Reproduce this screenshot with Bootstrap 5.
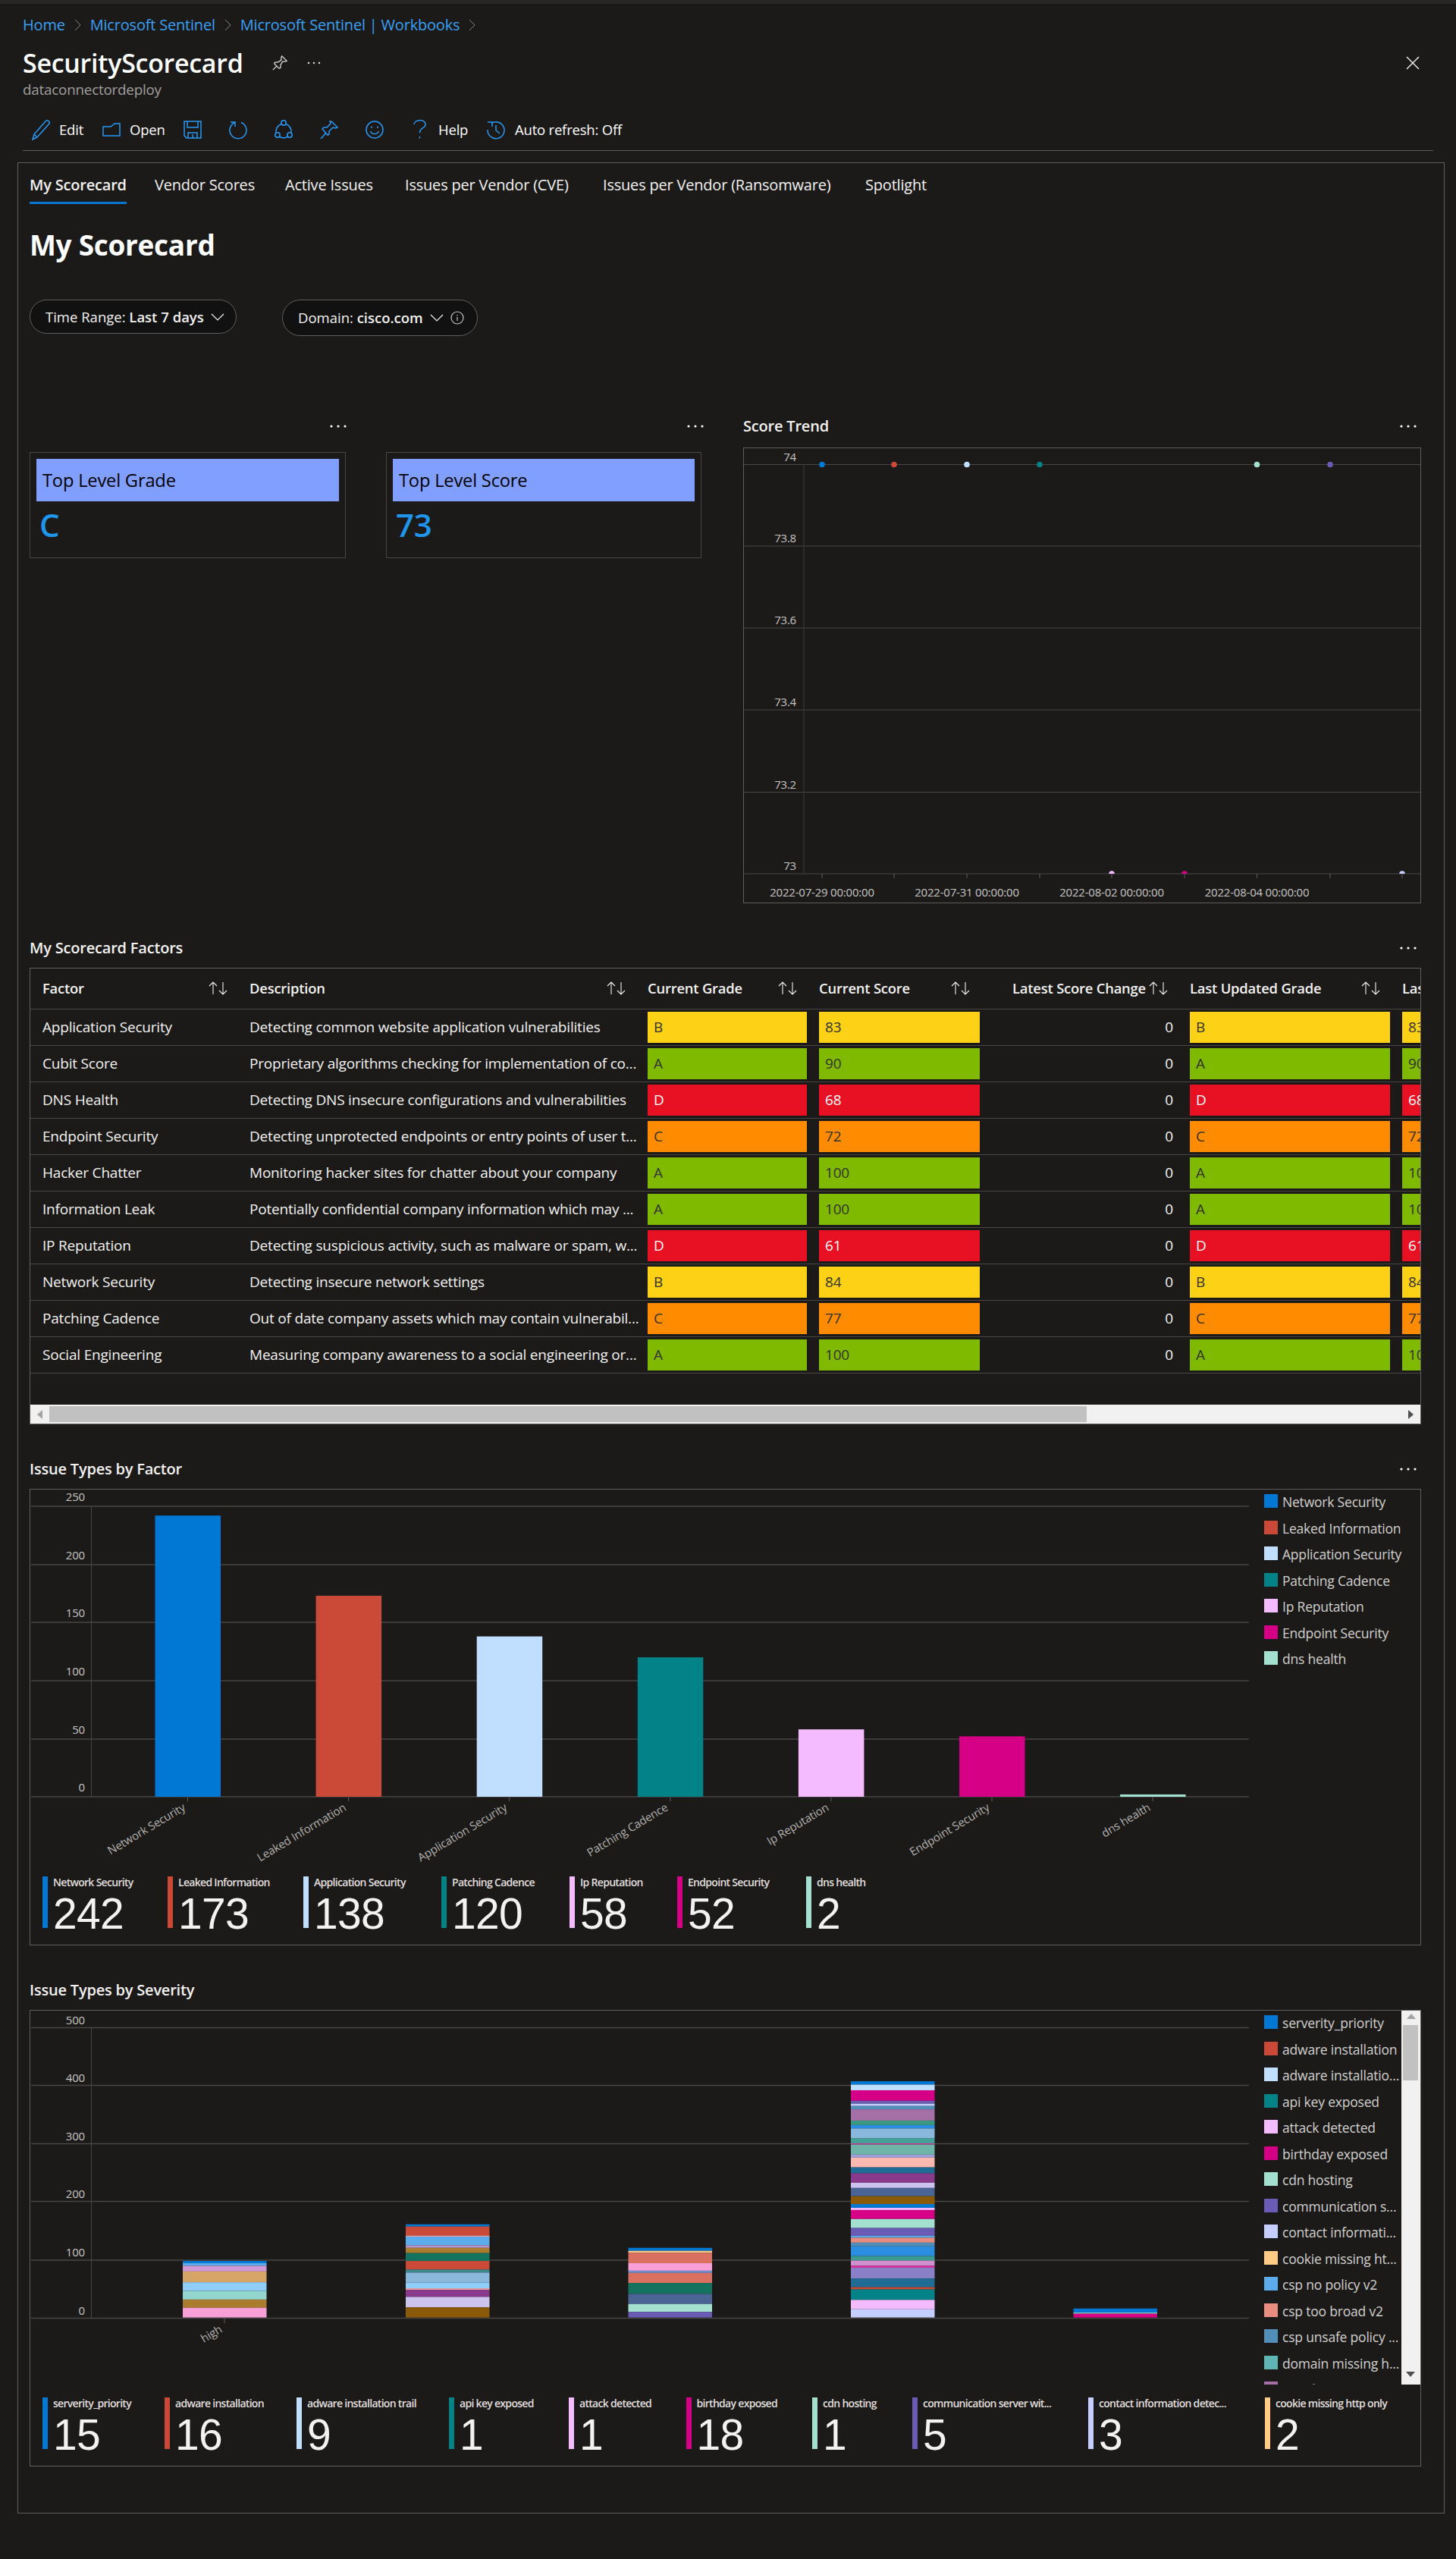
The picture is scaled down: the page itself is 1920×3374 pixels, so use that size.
<!DOCTYPE html>
<html lang="en">
<head>
  <meta charset="UTF-8">
  <title>SecurityScorecard</title>
  <meta name="viewport" content="width=device-width, initial-scale=1">
  <link href="https://cdn.jsdelivr.net/npm/bootstrap@5.3.3/dist/css/bootstrap.min.css" rel="stylesheet">
  <style>
    body {
      background: #1b1a19;
      color: #f3f2f1;
      font-family: "Open Sans", "Liberation Sans", sans-serif;
      font-size: 19px;
      letter-spacing: -.2px;
    }
    svg { display: block; flex: none; }
    .top-strip { height: 5px; background: #292827; }
    .page-head { padding: 14px 30px 0; }
    .crumbs { height: 28px; gap: 12px; font-size: 20px; }
    .crumbs a { color: #3aa0f3; text-decoration: none; }
    .title-row { height: 44px; margin-top: 14px; }
    .title-row h1 { font-size: 34px; font-weight: 600; margin: 0; color: #fff; letter-spacing: -.3px; width: 328px; white-space: nowrap; }
    .close-x { margin-left: auto; margin-right: 17px; }
    .sub-title { height: 24px; margin-top: 1px; color: #a19f9d; font-size: 18.8px; line-height: 24px; }
    .tool-bar { height: 51px; margin-top: 18px; border-bottom: 1px solid #605e5c; padding: 0 0 5px 12px; color: #fff; font-size: 18.5px; }
    .main-box { margin: 15px 15px 60px 23px; border: 1px solid #605e5c; padding: 0 30px 59px 15px; height: 3100px; }
    .tab-row { height: 54px; font-size: 20px; }
    .tab-row .nav-item:nth-child(1) { width: 165px; }
    .tab-row .nav-item:nth-child(2) { width: 172px; }
    .tab-row .nav-item:nth-child(3) { width: 158px; }
    .tab-row .nav-item:nth-child(4) { width: 261px; }
    .tab-row .nav-item:nth-child(5) { width: 346px; }
    .tab-row .nav-link { display: inline-block; color: #f3f2f1; padding: 7px 0 0; height: 54px; border-bottom: 3px solid transparent; line-height: 44px; white-space: nowrap; font-size: 20px; }
    .tab-row .nav-link.active { font-weight: 600; border-bottom-color: #0078d4; }
    .page-title { font-size: 37px; font-weight: 700; margin: 29px 0 0; height: 50px; line-height: 50px; color: #fff; letter-spacing: -.3px; }
    .filter-row { margin-top: 47px; height: 48px; align-items: flex-start; gap: 60px; }
    .filter-pill { background: #111; border: 1.5px solid #605e5c; color: #f3f2f1; font-size: 18.5px; height: 45px; width: 273px; padding: 0 18px 0 20px; gap: 9px; white-space: nowrap; }
    .filter-pill.tall { height: 48px; width: 258px; }
    .panel-row { margin-top: 101px; }
    .panel-head { height: 36px; font-weight: 600; font-size: 20px; }
    .score-tile { height: 140px; margin-top: 16px; border: 1px solid #484644; padding: 8px; }
    .score-tile-head { height: 56px; background: #809fff; color: #000; font-size: 23.7px; padding: 2px 8px 0; display: flex; align-items: center; }
    .score-tile-value { color: #1f95ec; font-size: 42px; font-weight: 600; line-height: 60px; margin-top: 1px; padding-left: 4px; }
    .chart-box { border: 1px solid #605e5c; }
    .trend-box { height: 601px; margin-top: 10px; }
    .section-gap { margin-top: 41px; }
    .box-gap { margin-top: 8px; height: 602px; }
    .factor-wrap { height: 575px; overflow: hidden; }
    .factor-table { table-layout: fixed; width: 2081px; margin: 0; --bs-table-bg: transparent; --bs-table-color: #f3f2f1; --bs-table-border-color: #484644; color: #f3f2f1; }
    .factor-table th { height: 53px; padding: 0 21px 0 8px; vertical-align: middle; font-weight: 600; font-size: 18.4px; white-space: nowrap; }
    .factor-table td { height: 48px; padding: 0 8px; vertical-align: middle; white-space: nowrap; overflow: hidden; }
    .factor-table th:first-child, .factor-table td:first-child { padding-left: 16px; }
    .grade-cell { height: 41px; line-height: 41px; padding-left: 8px; color: #323130; }
    .grade-red { background: #e81123; color: #fff; }
    .grade-yellow { background: #fcd116; }
    .grade-green { background: #7fba00; }
    .grade-orange { background: #ff8c00; }
    .scroll-h { height: 25px; background: #f1f1f1; }
    .scroll-h-thumb { width: 1368px; background: #c1c1c1; margin: 2px 0; }
    .arrow-cell { width: 25px; flex: none; }
    .chart-area { height: 500px; }
    .legend-col { width: 226px; flex: none; padding: 6px 0 0 20px; font-size: 17.5px; color: #d2d0ce; overflow: hidden; position: relative; }
    .legend-item { height: 34.5px; display: flex; gap: 6px; align-items: flex-start; line-height: 20px; white-space: nowrap; }
    .legend-swatch { width: 18px; height: 18px; flex: none; }
    .stat-row { padding-left: 16px; margin-top: 10px; height: 68px; }
    .stat-tile { display: flex; gap: 7px; flex: none; }
    .stat-bar { width: 7px; height: 68px; flex: none; }
    .stat-label { font-size: 14px; font-weight: 600; line-height: 16px; color: #e1dfdd; letter-spacing: -.7px; white-space: nowrap; }
    .stat-value { font-family: "Liberation Sans", sans-serif; font-size: 57px; line-height: 52px; margin-top: 7px; color: #f3f2f1; letter-spacing: -.7px; }
    .severity-area { height: 493px; }
    .severity-stats { margin-top: 17px; }
    .scroll-v { position: absolute; right: 0; top: 0; bottom: 0; width: 25px; background: #f1f1f1; }
    .scroll-v-thumb { position: absolute; left: 2px; right: 3px; top: 19px; height: 73px; background: #c1c1c1; }
    .chart-text { font-family: "Open Sans", "Liberation Sans", sans-serif; font-size: 15px; letter-spacing: -.2px; }
  </style>
</head>
<body>
  <div class="top-strip"></div>

  <div class="page-head">
    <nav class="crumbs d-flex align-items-center">
      <a href="#">Home</a>
      <svg width="9" height="16" viewBox="0 0 9 16"><path d="M1 1l7 7-7 7" fill="none" stroke="#8a8886"/></svg>
      <a href="#">Microsoft Sentinel</a>
      <svg width="9" height="16" viewBox="0 0 9 16"><path d="M1 1l7 7-7 7" fill="none" stroke="#8a8886"/></svg>
      <a href="#">Microsoft Sentinel | Workbooks</a>
      <svg width="9" height="16" viewBox="0 0 9 16"><path d="M1 1l7 7-7 7" fill="none" stroke="#8a8886"/></svg>
    </nav>

    <div class="title-row d-flex align-items-center">
      <h1>SecurityScorecard</h1>
      <svg width="22" height="22" viewBox="0 0 24 24" fill="none" stroke="#e1dfdd" stroke-width="1.4"><path d="M15 2l7 7-2 1-4 0-3 5 0 4-2 1-7-7 1-2 4 0 5-3 0-4zM8 16l-6 6"/></svg>
      <svg class="ms-4" width="20" height="4" viewBox="0 0 20 4" fill="#e1dfdd"><circle cx="3" cy="2" r="1.2"/><circle cx="10" cy="2" r="1.2"/><circle cx="17" cy="2" r="1.2"/></svg>
      <svg class="close-x" width="20" height="20" viewBox="0 0 20 20" stroke="#f3f2f1" stroke-width="1.4"><path d="M2 2l16 16M18 2L2 18"/></svg>
    </div>
    <div class="sub-title">dataconnectordeploy</div>

    <div class="tool-bar d-flex align-items-center">
      <svg width="24" height="28" viewBox="0 0 24 28" fill="none" stroke="#2899f5" stroke-width="1.5"><path d="M1 27l2-7L18 3a2.800 2.800 0 0 1 4.500 3.500L7 24zM3 20l4 4"/></svg>
      <span class="tool-text" style="margin-left:12px;width:57px">Edit</span>
      <svg width="24" height="18" viewBox="0 0 24 18" fill="none" stroke="#2899f5" stroke-width="1.5"><path d="M1 5h10l5-4h7v16H1z"/></svg>
      <span class="tool-text" style="margin-left:12px;width:71px">Open</span>
      <svg width="24" height="24" viewBox="0 0 24 24" fill="none" stroke="#2899f5" stroke-width="1.5"><path d="M1 1h22v22H4l-3-3zM5 1v8h14V1M6 23v-7h12v7M12 18v5"/></svg>
      <svg style="margin-left:36px" width="24" height="26" viewBox="0 0 24 26" fill="none" stroke="#2899f5" stroke-width="1.5"><path d="M8 3.500a11 11 0 1 0 8 0M8 9V3H2"/></svg>
      <svg style="margin-left:36px" width="24" height="26" viewBox="0 0 24 26" fill="none" stroke="#2899f5" stroke-width="1.5"><circle cx="12" cy="4" r="3.200"/><circle cx="4" cy="20" r="3.200"/><circle cx="20" cy="20" r="3.200"/><path d="M8.900 5.500A10.500 10.500 0 0 0 2 17M15.100 5.500A10.500 10.500 0 0 1 22 17M7 22.500a11 11 0 0 0 10 0"/></svg>
      <svg style="margin-left:36px" width="24" height="26" viewBox="0 0 24 26" fill="none" stroke="#2899f5" stroke-width="1.5"><path d="M15 2l8 8-3 1-3-1-5 5 0 4-2 1-7-8 2-2 4 0 5-5-1-3zM8 17l-7 8"/></svg>
      <svg style="margin-left:36px" width="24" height="24" viewBox="0 0 24 24" fill="none" stroke="#2899f5" stroke-width="1.5"><circle cx="12" cy="12" r="11"/><path d="M6.500 14a6 6 0 0 0 11 0M8 7.500v2.500M16 7.500v2.500"/></svg>
      <svg style="margin-left:39px" width="17" height="26" viewBox="0 0 17 26" fill="none" stroke="#2899f5" stroke-width="1.5"><path d="M1 6a7.500 5.500 0 1 1 11 5c-2 1.500-3.500 3-3.500 6M8.500 22v2.500"/></svg>
      <span class="tool-text" style="margin-left:16px;width:64px">Help</span>
      <svg width="24" height="26" viewBox="0 0 24 26" fill="none" stroke="#2899f5" stroke-width="1.5"><path d="M6 4.500A11 11 0 1 1 1 13M7 9V3H1M12 7v7l5 4"/></svg>
      <span class="tool-text" style="margin-left:13px">Auto refresh: Off</span>
    </div>
  </div>

  <div class="main-box">
    <ul class="nav tab-row">
      <li class="nav-item"><a class="nav-link active" href="#">My Scorecard</a></li>
      <li class="nav-item"><a class="nav-link" href="#">Vendor Scores</a></li>
      <li class="nav-item"><a class="nav-link" href="#">Active Issues</a></li>
      <li class="nav-item"><a class="nav-link" href="#">Issues per Vendor (CVE)</a></li>
      <li class="nav-item"><a class="nav-link" href="#">Issues per Vendor (Ransomware)</a></li>
      <li class="nav-item"><a class="nav-link" href="#">Spotlight</a></li>
    </ul>

    <h2 class="page-title">My Scorecard</h2>

    <div class="filter-row d-flex">
      <button class="filter-pill btn rounded-pill d-flex align-items-center">
        <span>Time Range: <b class="fw-semibold">Last 7 days</b></span>
        <svg width="18" height="10" viewBox="0 0 18 10" fill="none" stroke="#f3f2f1" stroke-width="1.2"><path d="M1 1l8 8 8-8"/></svg>
      </button>
      <button class="filter-pill tall btn rounded-pill d-flex align-items-center">
        <span>Domain: <b class="fw-semibold">cisco.com</b></span>
        <svg width="18" height="10" viewBox="0 0 18 10" fill="none" stroke="#f3f2f1" stroke-width="1.2"><path d="M1 1l8 8 8-8"/></svg>
        <svg width="18" height="18" viewBox="0 0 18 18" fill="none" stroke="#c8c6c4" stroke-width="1.2"><circle cx="9" cy="9" r="8"/><path d="M9 8v5M9 5v1.500"/></svg>
      </button>
    </div>

    <div class="panel-row d-flex">
      <div style="width:417px">
        <div class="panel-head d-flex justify-content-end align-items-center"><svg style="margin-right:-1px" width="22" height="4" viewBox="0 0 22 4" fill="#fff"><circle cx="2" cy="2" r="1.600"/><circle cx="11" cy="2" r="1.600"/><circle cx="20" cy="2" r="1.600"/></svg></div>
        <div class="score-tile">
          <div class="score-tile-head">Top Level Grade</div>
          <div class="score-tile-value">C</div>
        </div>
      </div>
      <div style="width:416px;margin-left:53px">
        <div class="panel-head d-flex justify-content-end align-items-center"><svg style="margin-right:-3px" width="22" height="4" viewBox="0 0 22 4" fill="#fff"><circle cx="2" cy="2" r="1.600"/><circle cx="11" cy="2" r="1.600"/><circle cx="20" cy="2" r="1.600"/></svg></div>
        <div class="score-tile">
          <div class="score-tile-head">Top Level Score</div>
          <div class="score-tile-value">73</div>
        </div>
      </div>
      <div style="width:894px;margin-left:55px">
        <div class="panel-head d-flex justify-content-between align-items-center">Score Trend<svg style="margin-right:6px" width="22" height="4" viewBox="0 0 22 4" fill="#fff"><circle cx="2" cy="2" r="1.600"/><circle cx="11" cy="2" r="1.600"/><circle cx="20" cy="2" r="1.600"/></svg></div>
        <div class="chart-box trend-box"><svg id="trendChart" class="chart-text" width="892" height="599" viewBox="981 591 892 599"></svg></div>
      </div>
    </div>

    <div class="panel-head section-gap d-flex justify-content-between align-items-center">My Scorecard Factors<svg style="margin-right:6px" width="22" height="4" viewBox="0 0 22 4" fill="#fff"><circle cx="2" cy="2" r="1.600"/><circle cx="11" cy="2" r="1.600"/><circle cx="20" cy="2" r="1.600"/></svg></div>
    <div class="chart-box box-gap">
      <div class="factor-wrap">
        <table class="table factor-table">
          <colgroup><col style="width:281px"><col style="width:525px"><col style="width:226px"><col style="width:228px"><col style="width:261px"><col style="width:280px"><col style="width:280px"></colgroup>
          <thead><tr id="factorHead"></tr></thead>
          <tbody id="factorBody"></tbody>
        </table>
      </div>
      <div class="scroll-h d-flex">
        <div class="arrow-cell d-flex align-items-center justify-content-center"><svg width="7" height="12" viewBox="0 0 7 12"><path d="M7 0v12L0 6z" fill="#a3a3a3"/></svg></div>
        <div class="scroll-h-thumb"></div>
        <div class="arrow-cell d-flex align-items-center justify-content-center ms-auto"><svg width="7" height="12" viewBox="0 0 7 12"><path d="M0 0v12l7-6z" fill="#505050"/></svg></div>
      </div>
    </div>

    <div class="panel-head section-gap d-flex justify-content-between align-items-center">Issue Types by Factor<svg style="margin-right:6px" width="22" height="4" viewBox="0 0 22 4" fill="#fff"><circle cx="2" cy="2" r="1.600"/><circle cx="11" cy="2" r="1.600"/><circle cx="20" cy="2" r="1.600"/></svg></div>
    <div class="chart-box box-gap">
      <div class="chart-area d-flex">
        <svg id="factorChart" class="chart-text" width="1607" height="500" viewBox="40 1964 1607 500"></svg>
        <div class="legend-col" id="factorLegend"></div>
      </div>
      <div class="stat-row d-flex" id="factorStats"></div>
    </div>

    <div class="panel-head section-gap d-flex align-items-center">Issue Types by Severity</div>
    <div class="chart-box box-gap">
      <div class="severity-area d-flex">
        <svg id="severityChart" class="chart-text" width="1607" height="493" viewBox="40 2651 1607 493"></svg>
        <div class="legend-col" id="severityLegend">
          <div class="scroll-v">
            <svg class="mx-auto mt-1" width="12" height="7" viewBox="0 0 12 7"><path d="M0 7h12L6 0z" fill="#a3a3a3"/></svg>
            <div class="scroll-v-thumb"></div>
            <svg class="position-absolute" style="left:6px;bottom:10px" width="12" height="7" viewBox="0 0 12 7"><path d="M0 0h12L6 7z" fill="#505050"/></svg>
          </div>
        </div>
      </div>
      <div class="stat-row severity-stats d-flex" id="severityStats"></div>
    </div>
  </div>

  <script src="https://cdn.jsdelivr.net/npm/bootstrap@5.3.3/dist/js/bootstrap.bundle.min.js"></script>
  <script>
    const C = {
      blue: '#0078d4', red: '#ca4a37', sky: '#c0dfff', teal: '#038387', pink: '#f4bbff', mag: '#d60087',
      mint: '#a3e0d0', purple: '#6a5bb5', lav: '#c5cfff', peach: '#ffcb85', azure: '#5cacec', salmon: '#e88d80',
      steel: '#528fb8', sea: '#5fb4b4', plum: '#a56fa8'
    };

    function add(parent, tag, attrs, text) {
      const el = document.createElementNS('http://www.w3.org/2000/svg', tag);
      for (const k in attrs) el.setAttribute(k, attrs[k]);
      if (text !== undefined) el.textContent = text;
      parent.appendChild(el);
      return el;
    }

    // score trend
    const trend = document.getElementById('trendChart');
    [612.5, 720, 828, 936, 1044.5, 1152].forEach((y, i) => {
      add(trend, 'line', {x1: 981, x2: 1873, y1: y, y2: y, stroke: '#484644', 'stroke-width': 1.2});
      add(trend, 'text', {x: 1050, y: y - 5, 'text-anchor': 'end', fill: '#c8c6c4'}, ['74', '73.8', '73.6', '73.4', '73.2', '73'][i]);
    });
    add(trend, 'line', {x1: 1060, x2: 1060, y1: 612, y2: 1152, stroke: '#3b3a39'});
    [[1084, C.blue, 1], [1179, C.red, 1], [1275, C.sky, 1], [1371, C.teal, 1], [1466, C.pink, 0],
     [1562, C.mag, 0], [1657.5, C.mint, 1], [1754, C.purple, 1], [1849, C.lav, 0]].forEach(p => {
      add(trend, 'line', {x1: p[0], x2: p[0], y1: 1152, y2: 1158, stroke: '#605e5c'});
      if (p[2]) add(trend, 'circle', {cx: p[0], cy: 612.5, r: 3.8, fill: p[1]});
      else add(trend, 'path', {d: `M${p[0] - 3.8} 1152a3.8 3.8 0 0 1 7.6 0z`, fill: p[1]});
    });
    [[1084, '2022-07-29 00:00:00'], [1275, '2022-07-31 00:00:00'], [1466, '2022-08-02 00:00:00'], [1657.5, '2022-08-04 00:00:00']].forEach(l => {
      add(trend, 'text', {x: l[0], y: 1182, 'text-anchor': 'middle', fill: '#c8c6c4'}, l[1]);
    });

    // factors table
    const heads = ['Factor', 'Description', 'Current Grade', 'Current Score', 'Latest Score Change', 'Last Updated Grade', 'Last Updated Score'];
    const sortIcon = '<svg width="25" height="18" viewBox="0 0 25 18" fill="none" stroke="#f3f2f1" stroke-width="1.1"><path d="M6 17V1M1 6l5-5 5 5M19 1v16M14 12l5 5 5-5"/></svg>';
    document.getElementById('factorHead').innerHTML = heads.map((h, i) =>
      `<th><div class="d-flex align-items-center ${i === 4 ? 'justify-content-end gap-1' : 'justify-content-between'}"><span>${h}</span>${sortIcon}</div></th>`).join('');
    const gradeColor = {A: 'green', B: 'yellow', C: 'orange', D: 'red'};
    const rows = [
      ['Application Security', 'Detecting common website application vulnerabilities', 'B', 83],
      ['Cubit Score', 'Proprietary algorithms checking for implementation of co...', 'A', 90],
      ['DNS Health', 'Detecting DNS insecure configurations and vulnerabilities', 'D', 68],
      ['Endpoint Security', 'Detecting unprotected endpoints or entry points of user t...', 'C', 72],
      ['Hacker Chatter', 'Monitoring hacker sites for chatter about your company', 'A', 100],
      ['Information Leak', 'Potentially confidential company information which may ...', 'A', 100],
      ['IP Reputation', 'Detecting suspicious activity, such as malware or spam, w...', 'D', 61],
      ['Network Security', 'Detecting insecure network settings', 'B', 84],
      ['Patching Cadence', 'Out of date company assets which may contain vulnerabil...', 'C', 77],
      ['Social Engineering', 'Measuring company awareness to a social engineering or...', 'A', 100]
    ];
    document.getElementById('factorBody').innerHTML = rows.map(r => {
      const cell = v => `<td><div class="grade-cell grade-${gradeColor[r[2]]}">${v}</div></td>`;
      return `<tr><td>${r[0]}</td><td>${r[1]}</td>${cell(r[2])}${cell(r[3])}<td class="text-end" style="padding-right:14px">0</td>${cell(r[2])}${cell(r[3])}</tr>`;
    }).join('');

    // issue types by factor
    const fc = document.getElementById('factorChart');
    [1986, 2063, 2139, 2216, 2293, 2369].forEach((y, i) => {
      add(fc, 'line', {x1: 41, x2: 1647, y1: y, y2: y, stroke: '#484644', 'stroke-width': 1.4});
      add(fc, 'text', {x: 112, y: y - 7, 'text-anchor': 'end', fill: '#c8c6c4'}, 250 - i * 50);
    });
    add(fc, 'line', {x1: 120.5, x2: 120.5, y1: 1986, y2: 2369, stroke: '#484644'});
    const factors = [['Network Security', 242, C.blue], ['Leaked Information', 173, C.red], ['Application Security', 138, C.sky],
      ['Patching Cadence', 120, C.teal], ['Ip Reputation', 58, C.pink], ['Endpoint Security', 52, C.mag], ['dns health', 2, C.mint]];
    factors.forEach((f, i) => {
      const x = 204.5 + i * 212.1, h = f[1] * 1.532;
      add(fc, 'rect', {x: x, y: 2369 - h, width: 86.5, height: h, fill: f[2]});
      const tx = x + 43;
      add(fc, 'line', {x1: tx, x2: tx, y1: 2370, y2: 2375, stroke: '#605e5c'});
      add(fc, 'text', {x: tx - 2, y: 2386, 'text-anchor': 'end', fill: '#b3b0ad', transform: `rotate(-31 ${tx - 2} 2386)`}, f[0]);
    });

    function legend(id, items) {
      const box = document.getElementById(id);
      items.forEach(it => {
        const row = document.createElement('div');
        row.className = 'legend-item';
        row.innerHTML = `<span class="legend-swatch" style="background:${it[1]}"></span><span>${it[0]}</span>`;
        box.insertBefore(row, box.querySelector('.scroll-v'));
      });
    }
    legend('factorLegend', factors.map(f => [f[0], f[2]]));

    function stats(id, items, xs) {
      const box = document.getElementById(id);
      items.forEach((it, i) => {
        const tile = document.createElement('div');
        tile.className = 'stat-tile';
        if (xs[i + 1]) tile.style.width = (xs[i + 1] - xs[i]) + 'px';
        tile.innerHTML = `<div class="stat-bar" style="background:${it[2]}"></div><div><div class="stat-label">${it[0]}</div><div class="stat-value">${it[1]}</div></div>`;
        box.appendChild(tile);
      });
    }
    stats('factorStats', factors, [56, 221, 400, 582, 751, 893, 1063]);

    // issue types by severity, segments are y offsets read off the reference crop, top to bottom of each bar
    const sc = document.getElementById('severityChart');
    [2673.5, 2749.5, 2826.5, 2902.5, 2980, 3056.5].forEach((y, i) => {
      add(sc, 'line', {x1: 41, x2: 1647, y1: y, y2: y, stroke: '#484644', 'stroke-width': 1.4});
      add(sc, 'text', {x: 112, y: y - 5, 'text-anchor': 'end', fill: '#c8c6c4'}, 500 - i * 100);
    });
    add(sc, 'line', {x1: 120.5, x2: 120.5, y1: 2673.5, y2: 3056.5, stroke: '#484644'});
    const stacks = [
      [241, [[772, C.blue], [778, '#5cacec'], [785, '#d09ad6'], [800, '#d6a566'], [829, '#8fcdfa'], [852, '#93d5cf'], [875, '#ac7c2e'], [897, '#f99fd8']]],
      [535, [[674, C.blue], [680, C.red], [704, '#f0a0a0'], [707, '#5cacec'], [730, '#b496cf'], [737, '#ac7c2e'], [751, '#14735f'], [772, C.red], [795, '#3a8a90'], [803, '#8ab8dc'], [830, '#8fcdfa'], [845, '#f0a0a0'], [849, '#8a3a8c'], [868, '#ccc4ef'], [896, '#8a5a08']]],
      [828.5, [[737, C.blue], [745, C.peach], [750, '#d97060'], [778, '#f99fd8'], [798, '#6d8fd0'], [804, '#d97060'], [831, '#14735f'], [860, '#4a6496'], [887, C.mint], [908, C.purple]]],
      [1122, [[292, C.blue], [301, C.sky], [316, C.mag], [344, C.purple], [352, C.lav], [358, C.steel], [367, C.plum], [397, '#3a9a80'], [409, '#2b8ee0'], [418, '#8ab8dc'], [444, '#46a098'], [458, '#d6309c'], [461, '#6fb4a8'], [488, '#a0a0d8'], [496, '#f9b8b0'], [522, '#1f6d96'], [538, '#8a3a8c'], [563, '#ccc4ef'], [577, '#4a6496'], [599, '#8a5a08'], [620, C.blue], [630, C.pink], [636, C.mag], [660, C.mint], [684, C.purple], [705, C.azure], [710, C.salmon], [723, C.steel], [733, '#2b8ee0'], [759, '#3a9a90'], [771, '#d090d0'], [785, '#e030a0'], [790, '#8a80c8'], [819, '#1f6d96'], [842, C.red], [848, C.teal], [876, C.pink], [901, C.lav]]],
      [1415.5, [[899, C.blue], [910, C.mint], [913, C.mag]]]
    ];
    stacks.forEach(s => {
      s[1].forEach((seg, i) => {
        const next = i + 1 < s[1].length ? s[1][i + 1][0] : 923;
        const y1 = 2600 + seg[0] / 2.026, y2 = 2600 + next / 2.026;
        add(sc, 'rect', {x: s[0], y: y1, width: 110.5, height: y2 - y1, fill: seg[1]});
      });
    });
    add(sc, 'line', {x1: 296, x2: 296, y1: 3057, y2: 3063, stroke: '#605e5c'});
    add(sc, 'text', {x: 294, y: 3074, 'text-anchor': 'end', fill: '#b3b0ad', transform: 'rotate(-31 294 3074)'}, 'high');

    legend('severityLegend', [['serverity_priority', C.blue], ['adware installation', C.red], ['adware installatio...', C.sky],
      ['api key exposed', C.teal], ['attack detected', C.pink], ['birthday exposed', C.mag], ['cdn hosting', C.mint],
      ['communication s...', C.purple], ['contact informati...', C.lav], ['cookie missing ht...', C.peach], ['csp no policy v2', C.azure],
      ['csp too broad v2', C.salmon], ['csp unsafe policy ...', C.steel], ['domain missing h...', C.sea], ['email security', C.plum]]);

    stats('severityStats', [['serverity_priority', 15, C.blue], ['adware installation', 16, C.red], ['adware installation trail', 9, C.sky],
      ['api key exposed', 1, C.teal], ['attack detected', 1, C.pink], ['birthday exposed', 18, C.mag], ['cdn hosting', 1, C.mint],
      ['communication server wit...', 5, C.purple], ['contact information detec...', 3, C.lav], ['cookie missing http only', 2, C.peach]],
      [56, 217, 391, 592, 750, 904.5, 1071, 1203, 1435, 1668]);
  </script>
</body>
</html>
